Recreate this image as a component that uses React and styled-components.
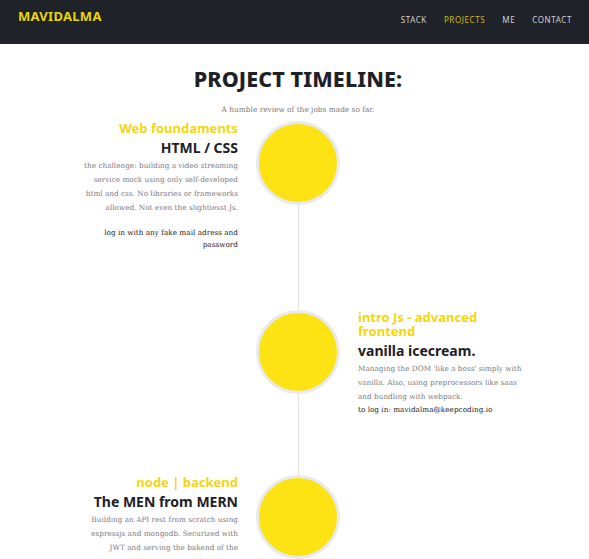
import styled, { createGlobalStyle } from "styled-components";

const GlobalStyle = createGlobalStyle`
  body {
    margin: 0;
    background: #ffffff;
    font-family: "DejaVu Serif", serif;
  }
`;

const Header = styled.header`
  height: 44px;
  background-color: #1f2229;
  display: flex;
  justify-content: space-between;
  align-items: flex-start;
  padding: 0 17px 0 18px;
  box-sizing: border-box;
`;

const Logo = styled.div`
  font-family: "Noto Sans", sans-serif;
  font-weight: 700;
  font-size: 13px;
  letter-spacing: 0.3px;
  color: #e6d40f;
  margin-top: 7px;
`;

const Nav = styled.nav`
  display: flex;
  gap: 17px;
  margin-top: 14px;
`;

const NavItem = styled.a`
  font-family: "Noto Sans", sans-serif;
  font-size: 8px;
  letter-spacing: 0.6px;
  text-transform: uppercase;
  color: ${({ active }) => (active ? "#cdbb14" : "#cfd1d5")};
`;

const Main = styled.main`
  padding-top: 21px;
`;

const Intro = styled.div`
  padding-left: 7px;
  text-align: center;
`;

const Title = styled.h1`
  font-family: "Noto Sans", sans-serif;
  font-weight: 800;
  font-size: 21.5px;
  letter-spacing: 0.1px;
  color: #1e2128;
  margin: 0;
  line-height: 28px;
`;

const Subtitle = styled.p`
  font-size: 7.4px;
  color: #777;
  margin: 12px 0 7px;
`;

const Row = styled.section`
  display: grid;
  grid-template-columns: 238px 84px 1fr;
  column-gap: 18px;
`;

const TextCell = styled.div`
  text-align: ${({ side }) => (side === "left" ? "right" : "left")};
  justify-self: ${({ side }) => (side === "left" ? "end" : "start")};
  max-width: ${({ side }) => (side === "left" ? "160px" : "166px")};
  padding-bottom: 59px;
`;

const Track = styled.div`
  display: flex;
  flex-direction: column;
  align-items: center;
`;

const Dot = styled.div`
  width: 78px;
  height: 78px;
  border-radius: 50%;
  background-color: #fde313;
  border: 3px solid #e7eaee;
  flex-shrink: 0;
`;

const Connector = styled.div`
  width: 1px;
  flex: 1;
  background-color: #e2e2e2;
`;

const Heading = styled.h3`
  font-family: "Noto Sans", sans-serif;
  font-weight: 700;
  font-size: 13px;
  line-height: 14px;
  color: #f5d60e;
  margin: 0;
`;

const SubHeading = styled.h4`
  font-family: "Noto Sans", sans-serif;
  font-weight: 700;
  font-size: 14px;
  line-height: 18px;
  color: #1e2128;
  margin: 4px 0 2px;
`;

const Body = styled.p`
  font-size: 7.3px;
  line-height: 14px;
  color: #7b7b80;
  margin: 0;
`;

const Note = styled.p`
  font-size: 7.3px;
  line-height: 12px;
  color: #222;
  margin: ${({ spaced }) => (spaced ? "12px 0 0" : "0")};
`;

const jobs = [
  {
    side: "left",
    heading: "Web foundaments",
    sub: "HTML / CSS",
    body: "the challenge: building a video streaming service mock using only self-developed html and css. No libraries or frameworks allowed. Not even the slightiesst Js.",
    note: "log in with any fake mail adress and password",
    spaced: true,
  },
  {
    side: "right",
    heading: "intro Js - advanced frontend",
    sub: "vanilla icecream.",
    body: "Managing the DOM 'like a boss' simply with vanilla. Also, using preprocessors like saas and bundling with webpack.",
    note: "to log in: mavidalma@keepcoding.io",
  },
  {
    side: "left",
    heading: "node | backend",
    sub: "The MEN from MERN",
    body: "Building an API rest from scratch using expressjs and mongodb. Securized with JWT and serving the bakend of the nodepop app.",
  },
];

const Content = ({ job }) => (
  <TextCell side={job.side}>
    <Heading>{job.heading}</Heading>
    <SubHeading>{job.sub}</SubHeading>
    <Body>{job.body}</Body>
    {job.note && <Note spaced={job.spaced}>{job.note}</Note>}
  </TextCell>
);

const App = () => (
  <>
    <GlobalStyle />
    <Header>
      <Logo>MAVIDALMA</Logo>
      <Nav>
        <NavItem>Stack</NavItem>
        <NavItem active>Projects</NavItem>
        <NavItem>Me</NavItem>
        <NavItem>Contact</NavItem>
      </Nav>
    </Header>
    <Main>
      <Intro>
        <Title>PROJECT TIMELINE:</Title>
        <Subtitle>A humble review of the jobs made so far.</Subtitle>
      </Intro>
      {jobs.map((job) => (
        <Row key={job.sub}>
          {job.side === "left" ? <Content job={job} /> : <div />}
          <Track>
            <Dot />
            <Connector />
          </Track>
          {job.side === "right" ? <Content job={job} /> : <div />}
        </Row>
      ))}
    </Main>
  </>
);

export default App;
